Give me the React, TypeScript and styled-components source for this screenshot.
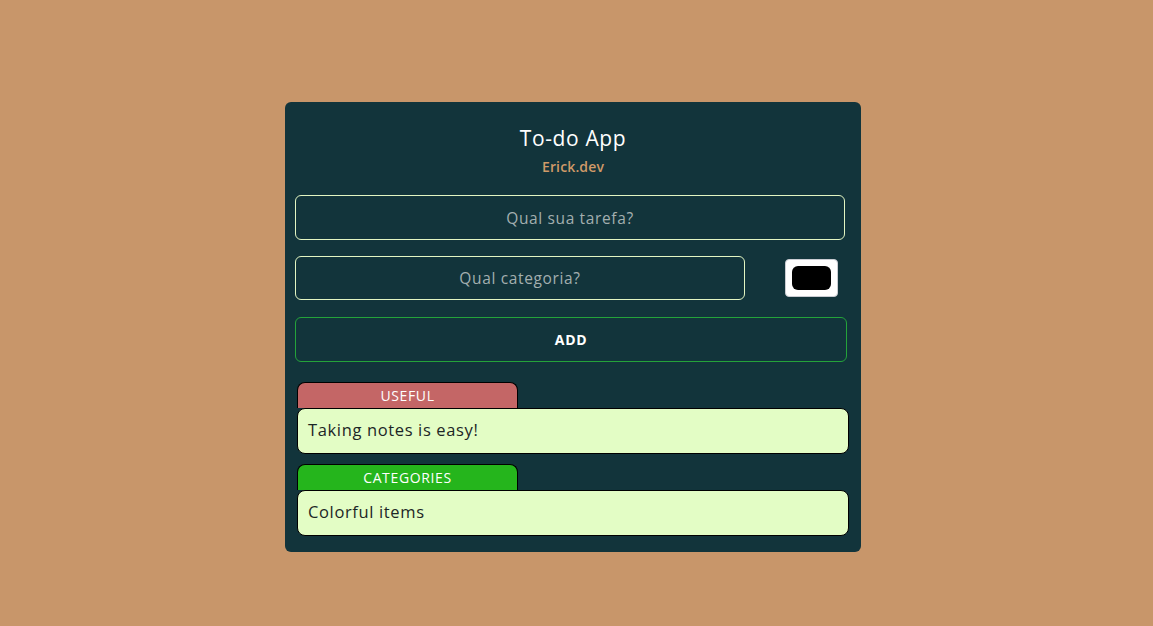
import React, { useState } from "react";
import styled, { createGlobalStyle } from "styled-components";

const GlobalStyle = createGlobalStyle`
    html, body {
        margin: 0;
        padding: 0;
        background-color: #c8966a;
        font-family: "Open Sans", "Noto Sans", sans-serif;
        letter-spacing: 0.04em;
    }
    * {
        box-sizing: border-box;
    }
`;

const Page = styled.div`
    width: 1153px;
    height: 626px;
    padding: 102px 0 0 285px;
`;

const Card = styled.div`
    width: 576px;
    height: 450px;
    background-color: #12343b;
    border-radius: 6px;
    padding: 22px 0 0 10px;
    display: flex;
    flex-direction: column;
`;

const Header = styled.div`
    width: 556px;
    display: flex;
    flex-direction: column;
    align-items: center;
    margin-bottom: 18px;

    h1 {
        margin: 0;
        font-size: 21px;
        font-weight: 500;
        color: #ffffff;
        line-height: 28px;
    }
    span {
        margin-top: 5px;
        font-size: 14px;
        font-weight: 600;
        letter-spacing: 0.01em;
        color: #cf9a68;
        line-height: 20px;
    }
`;

const TextInput = styled.input<{ $width: number }>`
    width: ${(p) => p.$width}px;
    height: 45px;
    background: transparent;
    border: 1px solid #e2f5c2;
    border-radius: 6px;
    text-align: center;
    font-family: inherit;
    letter-spacing: inherit;
    font-size: 15.5px;
    color: #ffffff;
    outline: none;

    &::placeholder {
        color: #a3afaf;
    }
`;

const Row = styled.div`
    display: flex;
    align-items: center;
    margin-top: 16px;
`;

const ColorPicker = styled.label`
    margin-left: 40px;
    width: 53px;
    height: 38px;
    background-color: #ffffff;
    border: 1px solid #c9ccd2;
    border-radius: 4px;
    display: flex;
    align-items: center;
    justify-content: center;

    input {
        display: none;
    }
`;

const Swatch = styled.div<{ $color: string }>`
    width: 39px;
    height: 24px;
    border-radius: 6px;
    background-color: ${(p) => p.$color};
`;

const AddButton = styled.button`
    margin-top: 17px;
    width: 552px;
    height: 45px;
    background: transparent;
    border: 1px solid #24a33a;
    border-radius: 6px;
    color: #ffffff;
    font-family: inherit;
    letter-spacing: inherit;
    font-size: 14px;
    font-weight: 700;
    cursor: pointer;
`;

const NoteList = styled.div`
    margin-top: 20px;
    padding-left: 2px;
    display: flex;
    flex-direction: column;
    gap: 10px;
`;

const Note = styled.div`
    display: flex;
    flex-direction: column;
`;

const Tag = styled.div<{ $color: string }>`
    width: 221px;
    height: 26px;
    background-color: ${(p) => p.$color};
    border: 1px solid #000000;
    border-bottom: none;
    border-radius: 8px 8px 0 0;
    color: #ffffff;
    font-size: 14px;
    line-height: 26px;
    text-align: center;
`;

const NoteBody = styled.div`
    width: 552px;
    height: 46px;
    background-color: #e3fdc5;
    border: 1px solid #000000;
    border-radius: 8px;
    padding: 0 0 3px 10px;
    display: flex;
    align-items: center;
    font-size: 16.5px;
    color: #1c2626;
`;

const notes = [
    { category: "USEFUL", color: "#c46666", text: "Taking notes is easy!" },
    { category: "CATEGORIES", color: "#25b51c", text: "Colorful items" },
];

const App: React.FC = () => {
    const [task, setTask] = useState("");
    const [category, setCategory] = useState("");
    const [color, setColor] = useState("#000000");

    return (
        <Page>
            <GlobalStyle />
            <Card>
                <Header>
                    <h1>To-do App</h1>
                    <span>Erick.dev</span>
                </Header>
                <TextInput
                    $width={550}
                    placeholder="Qual sua tarefa?"
                    value={task}
                    onChange={(e) => setTask(e.target.value)}
                />
                <Row>
                    <TextInput
                        $width={450}
                        style={{ height: 44 }}
                        placeholder="Qual categoria?"
                        value={category}
                        onChange={(e) => setCategory(e.target.value)}
                    />
                    <ColorPicker>
                        <Swatch $color={color} />
                        <input type="color" value={color} onChange={(e) => setColor(e.target.value)} />
                    </ColorPicker>
                </Row>
                <AddButton>ADD</AddButton>
                <NoteList>
                    {notes.map((n) => (
                        <Note key={n.category}>
                            <Tag $color={n.color}>{n.category}</Tag>
                            <NoteBody>{n.text}</NoteBody>
                        </Note>
                    ))}
                </NoteList>
            </Card>
        </Page>
    );
};

export default App;
